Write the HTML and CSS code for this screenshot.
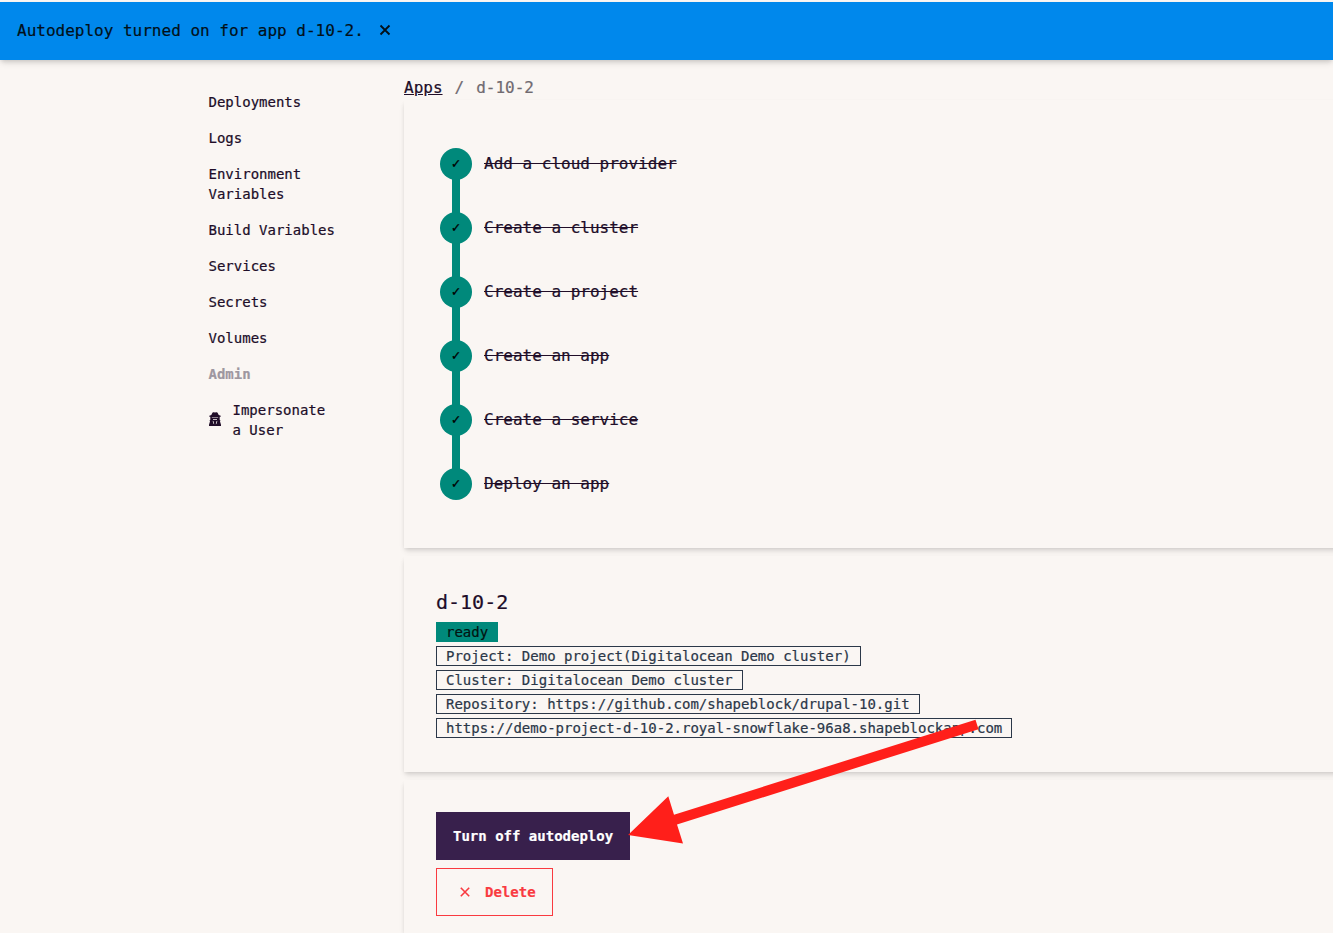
FILE: index.html
```
<!DOCTYPE html>
<html lang="en">
<head>
<meta charset="utf-8">
<title>d-10-2</title>
<link rel="stylesheet" href="styles.css">
</head>
<body>
<div class="alert"><span>Autodeploy turned on for app d-10-2.</span>
<svg class="alert-close" viewBox="0 0 12 12"><path d="M1.5 1.5l9 9M10.5 1.5l-9 9" fill="none" stroke="currentColor" stroke-width="1.8"/></svg></div>
<div class="layout">
<nav class="sidebar">
<a>Deployments</a><a>Logs</a><a>Environment Variables</a><a>Build Variables</a><a>Services</a><a>Secrets</a><a>Volumes</a>
<span class="menu-title">Admin</span>
<a class="with-icon"><svg class="spy" viewBox="0 0 12 14"><path fill="currentColor" fill-rule="evenodd" d="M2.300 3L3.300.9Q3.700 0 4.800.3L6 .6 7.200.3Q8.300 0 8.700.9L9.700 3l2 .7v1.100H10.700V8l.8.500-.6 1.200.3.400.8 2.700V14H0V12.800l.8-2.700.3-.4-.6-1.200.8-.5V4.800H.3V3.700zM2.800 5v.5h6.400V5zM3.600 8.700l1 3.400.6.100L4.700 9.500zM8.400 8.700l-1 3.400-.6.100.5-2.700zM4 7.200v.7h4v-.7z"/></svg><span>Impersonate a User</span></a>
</nav>
<main class="content">
<div class="crumbs"><a>Apps</a><span class="sep">/</span><span>d-10-2</span></div>
<section class="card">
<ul class="steps">
<li><i class="dot">✓</i><s>Add a cloud provider</s></li>
<li><i class="dot">✓</i><s>Create a cluster</s></li>
<li><i class="dot">✓</i><s>Create a project</s></li>
<li><i class="dot">✓</i><s>Create an app</s></li>
<li><i class="dot">✓</i><s>Create a service</s></li>
<li><i class="dot">✓</i><s>Deploy an app</s></li>
</ul>
</section>
<section class="card info">
<h2>d-10-2</h2>
<div class="badges">
<span class="badge ready">ready</span>
<span class="badge">Project: Demo project(Digitalocean Demo cluster)</span>
<span class="badge">Cluster: Digitalocean Demo cluster</span>
<span class="badge">Repository: https://github.com/shapeblock/drupal-10.git</span>
<span class="badge">https://demo-project-d-10-2.royal-snowflake-96a8.shapeblockapp.com</span>
</div>
</section>
<section class="card actions">
<button class="btn primary">Turn off autodeploy</button>
<button class="btn danger"><svg class="x" viewBox="0 0 10 10"><path d="M.8.8l8.400 8.400M9.200.8L.8 9.200" fill="none" stroke="currentColor" stroke-width="1.600"/></svg>Delete</button>
</section>
</main>
</div>
<svg class="arrow" viewBox="0 0 350 125"><path fill="#ff1f1a" d="M0 115L40.300 76.300l5.700 18.500L347.500-.3l3 9.500L49 104.500 55 123.500z"/></svg>
</body>
</html>
```
FILE: styles.css
```
* { box-sizing: border-box; }
body {
  margin: 0;
  padding-top: 2px;
  height: 933px;
  overflow: hidden;
  background: #faf6f3;
  color: #200d28;
  font: 16px/24px "DejaVu Sans Mono", monospace;
  -webkit-text-stroke: .2px currentColor;
}
.alert {
  display: flex;
  align-items: center;
  gap: 15px;
  height: 58px;
  padding: 0 17px 1px;
  background: #0088ec;
  color: #021019;
  box-shadow: 0 4px 6px -1px rgba(0, 0, 0, .12), 0 2px 4px -1px rgba(0, 0, 0, .1);
}
.alert-close { width: 12px; height: 12px; margin-bottom: 1px; }
.layout { display: flex; padding: 16px 0 0 192px; }
.sidebar {
  display: flex;
  flex-direction: column;
  width: 160px;
  margin-right: 52px;
  flex: none;
  padding-top: 8px;
  font-size: 14px;
  line-height: 20px;
}
.sidebar > * { padding: 8px 16px 8px 16.500px; }
.sidebar .menu-title { color: #9e97a0; font-weight: bold; }
.sidebar .with-icon { display: flex; align-items: center; gap: 12px; }
.spy { width: 12px; height: 14px; flex: none; margin-bottom: 2px; }
.content { width: 960px; flex: none; }
.crumbs { display: flex; color: #706a70; }
.crumbs a { color: #200d28; text-decoration: underline; }
.crumbs .sep { margin: 0 12px; }
.card {
  padding: 32px;
  margin-bottom: 8px;
  background: #faf6f3;
  box-shadow: 0 4px 6px -1px rgba(0, 0, 0, .1), 0 2px 4px -1px rgba(0, 0, 0, .1);
}
.steps { list-style: none; margin: 0; padding: 0; }
.steps li { display: flex; align-items: center; gap: 12px; height: 64px; padding-left: 4px; position: relative; }
.steps li + li::before {
  content: "";
  position: absolute;
  left: 16px;
  top: -32px;
  width: 8px;
  height: 64px;
  background: #00897b;
}
.dot {
  position: relative;
  z-index: 1;
  width: 32px;
  height: 32px;
  border-radius: 50%;
  background: #00897b;
  color: #000;
  font-size: 14px;
  font-style: normal;
  line-height: 31px;
  text-align: center;
  -webkit-text-stroke: .3px #000;
}
.info { height: 216px; }
h2 { margin: 0 0 6px; font-size: 20px; line-height: 28px; font-weight: normal; }
.badges { display: flex; flex-direction: column; align-items: flex-start; gap: 4px; }
.badge {
  height: 20px;
  padding: 0 9px;
  border: 1px solid #2b3748;
  color: #2b3748;
  font-size: 14px;
  line-height: 18px;
  white-space: nowrap;
}
.badge.ready { background: #00897b; border-color: #00897b; color: #021310; }
.actions { display: flex; flex-direction: column; align-items: flex-start; gap: 8px; height: 153px; margin-bottom: 0; padding-bottom: 0; }
.btn {
  display: flex;
  align-items: center;
  flex: none;
  height: 48px;
  padding: 0 16px;
  border: 1px solid #38204c;
  border-radius: 0;
  font: bold 14px/20px "DejaVu Sans Mono", monospace;
}
.primary { background: #38204c; color: #fff; }
.danger { background: none; color: #f93a40; border-color: #f93a40; }
.x { width: 10px; height: 10px; margin: 0 15px 0 7px; }
.arrow { position: absolute; left: 628px; top: 720px; width: 350px; height: 125px; z-index: 2; overflow: visible; }
```
